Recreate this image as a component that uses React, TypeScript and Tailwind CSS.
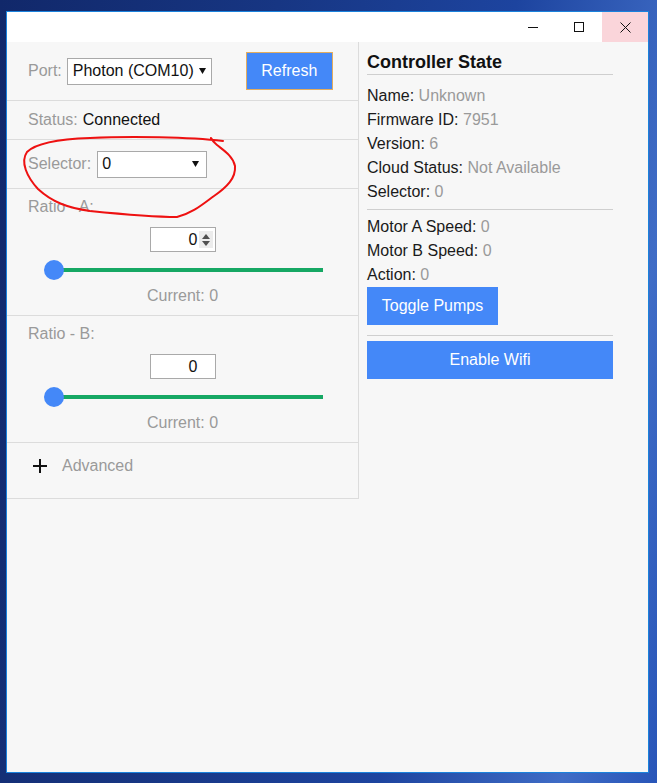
import React from "react";

const font = "font-['Liberation_Sans',Arial,sans-serif]";

function Caret() {
  return (
    <svg width="7" height="6" viewBox="0 0 7 6" className="shrink-0">
      <polygon points="0,0 7,0 3.5,6" fill="#111" />
    </svg>
  );
}

function NumberBox({ spinner }: { spinner?: boolean }) {
  return (
    <div className="mx-auto w-[66px] h-[25px] border border-[#a9a9a9] bg-white flex items-center justify-end relative">
      <span className="text-[16px] leading-[20px] text-[#111] mr-[17px]">0</span>
      {spinner && (
        <div className="absolute right-[2px] top-[3px] w-[14px] h-[17px] bg-[#ececec] flex flex-col items-center justify-center gap-[2px]">
          <svg width="8" height="5" viewBox="0 0 8 5">
            <polygon points="0,5 8,5 4,0" fill="#505050" />
          </svg>
          <svg width="8" height="5" viewBox="0 0 8 5">
            <polygon points="0,0 8,0 4,5" fill="#505050" />
          </svg>
        </div>
      )}
    </div>
  );
}

function Slider() {
  return (
    <div className="ml-[37px] w-[279px] h-[20px] relative flex items-center">
      <div className="ml-[10px] flex-1 h-[4px] bg-[#16a864]" />
      <div className="absolute left-0 top-0 w-[20px] h-[20px] rounded-full bg-[#4488f8]" />
    </div>
  );
}

function RatioRow({ label, spinner }: { label: string; spinner?: boolean }) {
  return (
    <div className="h-[127px] border-b border-[#dcdcdc] pt-[8px] flex flex-col">
      <div className="pl-[21px] leading-[20px] text-[#9a9a9a]">{label}</div>
      <div className="mt-[10px]">
        <NumberBox spinner={spinner} />
      </div>
      <div className="mt-[8px]">
        <Slider />
      </div>
      <div className="mt-[6px] leading-[20px] text-center text-[#9a9a9a]">Current: 0</div>
    </div>
  );
}

function KV({ k, v }: { k: string; v: string }) {
  return (
    <div className="h-[24px] leading-[24px] whitespace-nowrap">
      <span className="text-[#1a1a1a]">{k}: </span>
      <span className="text-[#9a9a9a]">{v}</span>
    </div>
  );
}

export default function App() {
  return (
    <div
      className={`${font} w-[657px] h-[783px] overflow-hidden pt-[11px] pl-[6px] text-[16px] bg-[linear-gradient(100deg,#11286a_0%,#173683_35%,#1d449f_65%,#3f6cc6_88%,#2855b8_100%)]`}
    >
      <div className="w-[643px] h-[762px] border border-[#1a82dc] flex flex-col bg-[#f7f7f7]">
        {/* Title bar */}
        <div className="h-[30px] bg-white flex justify-end shrink-0">
          <div className="w-[46px] h-[30px] flex items-center justify-center">
            <div className="w-[10px] h-[1px] bg-[#111]" />
          </div>
          <div className="w-[46px] h-[30px] flex items-center justify-center">
            <div className="w-[10px] h-[10px] border border-[#111]" />
          </div>
          <div className="w-[46px] h-[30px] flex items-center justify-center bg-[#fad5da]">
            <svg width="11" height="11" viewBox="0 0 11 11">
              <path d="M0.5 0.5 L10.5 10.5 M10.5 0.5 L0.5 10.5" stroke="#111" strokeWidth="1" />
            </svg>
          </div>
        </div>

        {/* Content */}
        <div className="flex-1 flex items-start relative">
          {/* Left panel */}
          <div className="w-[352px] border-r border-b border-[#dcdcdc] flex flex-col">
            <div className="h-[59px] border-b border-[#dcdcdc] pl-[21px] flex items-center">
              <span className="text-[#9a9a9a]">Port:</span>
              <div className="ml-[5px] w-[145px] h-[27px] border border-[#a9a9a9] bg-white flex items-center pl-[5px] pr-[5px] justify-between">
                <span className="text-[#111] whitespace-nowrap">Photon (COM10)</span>
                <Caret />
              </div>
              <div className="ml-[34px] w-[87px] h-[38px] bg-[#4488f8] border border-[#e3ad5f] text-white flex items-center justify-center">
                Refresh
              </div>
            </div>
            <div className="h-[39px] border-b border-[#dcdcdc] pl-[21px] flex items-center">
              <span className="text-[#9a9a9a]">Status:</span>
              <span className="ml-[5px] text-[#111]">Connected</span>
            </div>
            <div className="h-[49px] border-b border-[#dcdcdc] pl-[21px] flex items-center">
              <span className="text-[#9a9a9a]">Selector:</span>
              <div className="ml-[6px] w-[110px] h-[27px] border border-[#a9a9a9] bg-white flex items-center pl-[4px] pr-[7px] justify-between">
                <span className="text-[#111]">0</span>
                <Caret />
              </div>
            </div>
            <RatioRow label="Ratio - A:" spinner />
            <RatioRow label="Ratio - B:" />
            <div className="h-[55px] pl-[26px] pt-[13px]">
              <div className="h-[20px] flex items-center">
                <svg width="14" height="14" viewBox="0 0 14 14">
                  <path d="M7 0 V14 M0 7 H14" stroke="#111" strokeWidth="2" />
                </svg>
                <span className="ml-[15px] leading-[20px] text-[#9a9a9a]">Advanced</span>
              </div>
            </div>
          </div>

          {/* Right panel */}
          <div className="ml-[8px] w-[246px] pt-[9px] flex flex-col">
            <div className="text-[18px] font-bold leading-[22px] text-[#111] pb-[1px] border-b border-[#cfcfcf]">
              Controller State
            </div>
            <div className="mt-[9px]">
              <KV k="Name" v="Unknown" />
              <KV k="Firmware ID" v="7951" />
              <KV k="Version" v="6" />
              <KV k="Cloud Status" v="Not Available" />
              <KV k="Selector" v="0" />
            </div>
            <div className="mt-[5px] border-t border-[#cfcfcf]" />
            <div className="mt-[5px]">
              <KV k="Motor A Speed" v="0" />
              <KV k="Motor B Speed" v="0" />
              <KV k="Action" v="0" />
            </div>
            <div className="w-[131px] h-[38px] bg-[#4488f8] text-white flex items-center justify-center">
              Toggle Pumps
            </div>
            <div className="mt-[10px] border-t border-[#cfcfcf]" />
            <div className="mt-[5px] h-[38px] bg-[#4488f8] text-white flex items-center justify-center">
              Enable Wifi
            </div>
          </div>

          {/* Red hand-drawn annotation */}
          <svg
            className="absolute left-0 top-0 pointer-events-none"
            width="260"
            height="200"
            viewBox="7 42 260 200"
          >
            <path
              d="M223,141 C190,137 130,136 90,138 C60,139 36,143 27,152 C20,162 27,177 38,189 C52,202 68,208 90,211 C120,214 150,217 177,217 C193,213 203,204 214,196 C227,187 236,178 235,166 C233,156 223,150 217,145 C213,142 212,140 211,138"
              fill="none"
              stroke="#ee1111"
              strokeWidth="2"
              strokeLinecap="round"
            />
          </svg>
        </div>
      </div>
    </div>
  );
}
